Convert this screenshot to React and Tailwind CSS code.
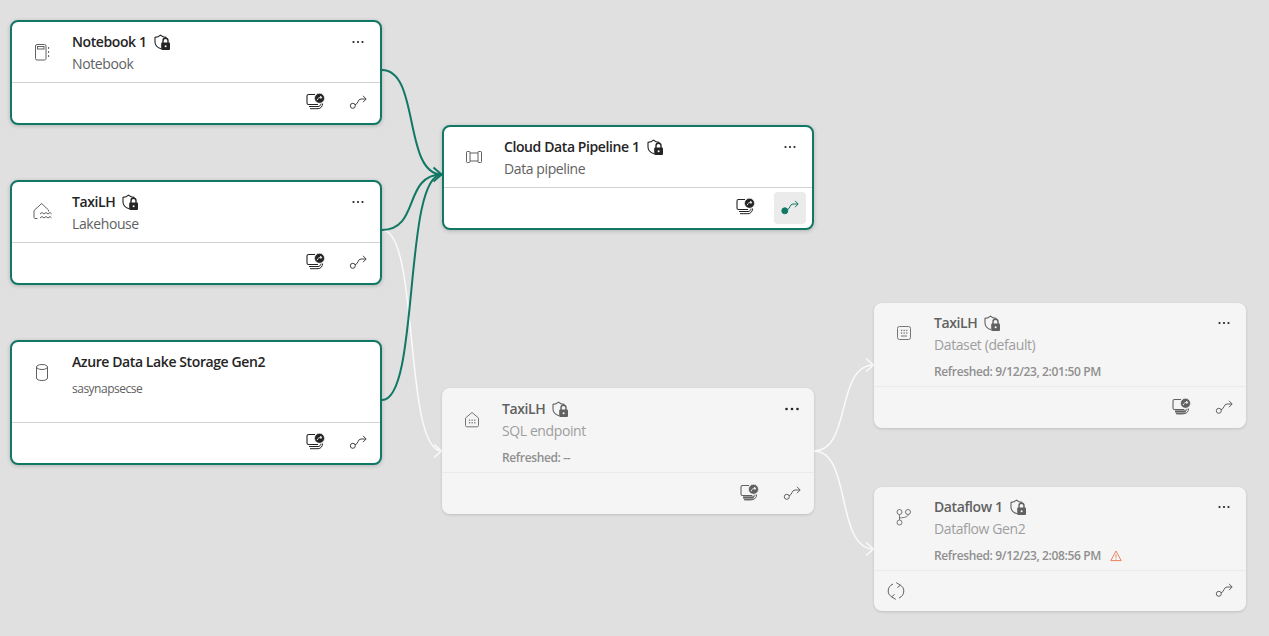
import React from "react";

const GREEN = "#117865";

const Shield = ({ c }) => (
  <svg width="18" height="18" viewBox="0 0 18 18" fill="none" className="shrink-0">
    <path d="M7 14.8C3.2 13.6 1 11.2 1 8V3.4C3.2 3.3 5 2.6 6.5 1.2C8 2.6 9.8 3.3 12 3.4V4.5" stroke={c} strokeWidth="1.1" strokeLinejoin="round" />
    <path d="M9 9V6.8a2.5 2.5 0 0 1 5 0V9" stroke={c} strokeWidth="1.4" />
    <rect x="7.2" y="8.6" width="8.8" height="7.4" rx="1" fill={c} />
    <circle cx="11.6" cy="12.3" r="1" fill="#fff" />
  </svg>
);

const Dots = ({ c, big }) => (
  <svg width="20" height="12" viewBox="0 0 20 12" fill={c}>
    <circle cx={big ? 4.5 : 5.5} cy="6" r={big ? 1.3 : 1.1} />
    <circle cx="10" cy="6" r={big ? 1.3 : 1.1} />
    <circle cx={big ? 15.5 : 14.5} cy="6" r={big ? 1.3 : 1.1} />
  </svg>
);

const Lineage = ({ c = "#424242", active }) => (
  <svg width="20" height="20" viewBox="0 0 20 20" fill="none">
    <circle cx="4.8" cy="12.8" r={active ? 3 : 2.5} stroke={active ? GREEN : c} fill={active ? GREEN : "none"} strokeWidth="1" />
    <path d="M7 11.8C10.5 11 9.5 6 13 6H18" stroke={active ? GREEN : c} strokeWidth="1" />
    <path d="M15 2.8L18.2 6L15 9.2" stroke={active ? GREEN : c} strokeWidth="1" />
  </svg>
);

const Monitor = ({ c = "#242424", soft }) => (
  <svg width="20" height="20" viewBox="0 0 20 20" fill="none">
    <g transform="translate(0 -1.5)">
      {soft && <path d="M3 13H14V15C14 17 12 18 10 18H6C4 18 3 16 3 15Z" fill="#9a9a9a" />}
      <path d="M9 3H2.5C1.7 3 1 3.7 1 4.5V11.5C1 12.3 1.7 13 2.5 13H12" stroke={c} strokeWidth="1.1" />
      <path d="M3 15H12C13.6 15 15 13.8 15 12" stroke={c} strokeWidth="1" />
      <path d="M4 17.2H12C14.6 17.2 16.6 15 16.6 12" stroke={c} strokeWidth="1" />
      <circle cx="13.5" cy="6.8" r="5" fill={c} stroke="#fff" strokeWidth="0.6" />
      <path d="M11.2 8.6C11.6 6.8 13 6 15.4 5.8M14 4.8L15.8 5.8L14.6 7.4" stroke="#fff" strokeWidth="0.9" />
    </g>
  </svg>
);

const Refresh = () => (
  <svg width="20" height="20" viewBox="0 0 20 20" fill="none" stroke="#616161" strokeWidth="1">
    <path d="M7 3C4 4.200 2.200 6.800 2.200 10C2.200 12.600 3.600 14.600 5.600 15.800" />
    <path d="M13 17C16 15.800 17.800 13.200 17.800 10C17.800 7.400 16.400 5.400 14.400 4.200" />
    <path d="M10.200 1.600L14.400 4.200L11.400 6.600M9.800 18.400L5.600 15.800L8.600 13.400" />
  </svg>
);

const Warn = () => (
  <svg width="12" height="12" viewBox="0 0 12 12" fill="none" stroke="#e8825c" strokeWidth="1">
    <path d="M6 1L11.2 10.6H0.8Z" strokeLinejoin="round" />
    <path d="M6 4.4V7.6M6 8.4V9.4" />
  </svg>
);

const Notebook = () => (
  <svg width="20" height="20" viewBox="0 0 20 20" fill="none" stroke="#616161" strokeWidth="1">
    <rect x="3.500" y="2.500" width="10.500" height="15.500" rx="1.500" />
    <rect x="5.500" y="4.500" width="6.500" height="2.500" />
    <path d="M16.600 5V7M16.600 9V11M16.600 13V15" />
  </svg>
);

const Lake = () => (
  <svg width="20" height="20" viewBox="0 0 20 20" fill="none" stroke="#616161" strokeWidth="1">
    <path d="M5.500 16.500H3C2.400 16.500 2 16 2 15.500V8.500L9.700 1.500L16.500 8V9.500" strokeLinejoin="round" />
    <path d="M8 12L10 10.500L12 12L14 10.500L16 12L18 10.500L19.600 12" />
    <path d="M8 16L10 14.500L12 16L14 14.500L16 16L18 14.500L19.600 16" />
  </svg>
);

const Cylinder = () => (
  <svg width="20" height="20" viewBox="0 0 20 20" fill="none" stroke="#616161" strokeWidth="1">
    <ellipse cx="10" cy="5" rx="5.500" ry="2.500" />
    <path d="M4.500 5V16C4.500 17.600 7 18.500 10 18.500S15.500 17.600 15.500 16V5" />
  </svg>
);

const Pipeline = () => (
  <svg width="20" height="20" viewBox="0 0 20 20" fill="none" stroke="#616161" strokeWidth="1">
    <rect x="2.500" y="4.500" width="3.500" height="11" rx="0.800" />
    <rect x="14" y="4.500" width="3.500" height="11" rx="0.800" />
    <path d="M6 6H14M6 14H14" />
  </svg>
);

const Grid = ({ ox, oy }) => (
  <g fill="#757575">
    {[0, 1, 2].map((i) => [0, 1].map((j) => <rect key={i + "-" + j} x={ox + i * 2.6} y={oy + j * 2.6} width="1.300" height="1.300" />))}
  </g>
);

const Sql = () => (
  <svg width="20" height="20" viewBox="0 0 20 20" fill="none">
    <path d="M3.500 9L10 3.500L16.500 9V16.500C16.500 17.300 16 17.800 15.200 17.800H4.800C4 17.800 3.500 17.300 3.500 16.500Z" stroke="#757575" strokeWidth="1" strokeLinejoin="round" />
    <Grid ox={6.900} oy={10.500} />
  </svg>
);

const Dataset = () => (
  <svg width="20" height="20" viewBox="0 0 20 20" fill="none">
    <rect x="3.500" y="3.500" width="13" height="13" rx="2" stroke="#757575" strokeWidth="1" />
    <Grid ox={6.900} oy={6.800} />
    <path d="M6.900 13H13" stroke="#757575" strokeWidth="1" />
  </svg>
);

const Flow = () => (
  <svg width="20" height="20" viewBox="0 0 20 20" fill="none" stroke="#757575" strokeWidth="1">
    <circle cx="5.500" cy="5" r="2.500" />
    <circle cx="14" cy="5" r="2.500" />
    <circle cx="5.500" cy="15.500" r="2.500" />
    <path d="M5.500 7.500V13M14 7.500C14 10 11 10.500 5.500 11" />
  </svg>
);

const nodes = [
  { pos: "left-[10px] top-[20px] w-[372px] h-[105px]", top: "h-[61px]", bottom: "h-[40px]", icon: <Notebook />, title: "Notebook 1", sub: "Notebook", lock: true },
  { pos: "left-[10px] top-[180px] w-[372px] h-[105px]", top: "h-[61px]", bottom: "h-[40px]", icon: <Lake />, title: "TaxiLH", sub: "Lakehouse", lock: true },
  { pos: "left-[10px] top-[340px] w-[372px] h-[125px]", top: "h-[81px]", bottom: "h-[40px]", icon: <Cylinder />, title: "Azure Data Lake Storage Gen2", small: "sasynapsecse", noDots: true },
  { pos: "left-[442px] top-[125px] w-[372px] h-[105px]", top: "h-[61px]", bottom: "h-[40px]", icon: <Pipeline />, title: "Cloud Data Pipeline 1", sub: "Data pipeline", lock: true, active: true },
  { pos: "left-[442px] top-[388px] w-[372px] h-[126px]", top: "h-[84px] pt-[1px]", bottom: "h-[41px]", grey: true, icon: <Sql />, title: "TaxiLH", sub: "SQL endpoint", lock: true, refreshed: "Refreshed: --", bigDots: true },
  { pos: "left-[874px] top-[303px] w-[372px] h-[125px]", top: "h-[83px]", bottom: "h-[41px]", grey: true, icon: <Dataset />, title: "TaxiLH", sub: "Dataset (default)", lock: true, refreshed: "Refreshed: 9/12/23, 2:01:50 PM" },
  { pos: "left-[874px] top-[487px] w-[372px] h-[124px]", top: "h-[83px]", bottom: "h-[40px]", grey: true, icon: <Flow />, title: "Dataflow 1", sub: "Dataflow Gen2", lock: true, refreshed: "Refreshed: 9/12/23, 2:08:56 PM", warn: true, refresh: true },
];

function Node({ n }) {
  const g = n.grey;
  return (
    <div className={"absolute flex flex-col rounded-lg " + n.pos + (g ? " bg-[#f5f5f5] shadow-[0_1px_3px_rgba(0,0,0,0.14)]" : " bg-white border-2 border-[#117865] shadow-[0_1px_4px_rgba(0,0,0,0.2)]")}>
      <div className={"flex items-start pl-5 pr-[12px] " + n.top}>
        <div className="mt-5 h-5 w-5 shrink-0">{n.icon}</div>
        <div className="ml-5 min-w-0 flex-1">
          <div className="flex h-5 mt-[10px] items-center">
            <span className={"text-[14px] leading-5 font-semibold tracking-[-0.4px] " + (g ? "text-[#616161]" : "text-[#242424]")}>{n.title}</span>
            {n.lock && <span className="ml-[7px] mt-[1px] flex"><Shield c={g ? "#616161" : "#242424"} /></span>}
          </div>
          {n.sub && <div className={"mt-[2px] text-[14px] leading-5 tracking-[-0.4px] " + (g ? "text-[#9e9e9e]" : "text-[#616161]")}>{n.sub}</div>}
          {n.small && <div className="mt-[9px] text-[12px] leading-4 tracking-[-0.5px] text-[#616161]">{n.small}</div>}
          {n.refreshed && (
            <div className="mt-[9px] flex h-4 items-center text-[12px] font-semibold leading-4 tracking-[-0.36px] text-[#8f8f8f]">
              {n.refreshed}
              {n.warn && <span className="ml-[9px] flex"><Warn /></span>}
            </div>
          )}
        </div>
        {!n.noDots && <div className="mt-[10px] flex h-5 w-5 shrink-0 items-center justify-center"><Dots c="#242424" big={n.bigDots} /></div>}
      </div>
      <div className={"h-px shrink-0 " + (g ? "bg-[#ebebeb]" : "bg-[#d1d1d1]")} />
      <div className={"flex items-center px-[6px] " + n.bottom + (n.refresh ? " justify-between" : " justify-end")}>
        {n.refresh ? (
          <div className="flex h-8 w-8 items-center justify-center"><Refresh /></div>
        ) : (
          <div className={"flex h-8 w-8 items-center justify-center " + (n.active ? "mr-3" : "mr-[10px]")}><Monitor c={g ? "#616161" : "#242424"} soft={g} /></div>
        )}
        <div className={"flex h-8 w-8 items-center justify-center rounded " + (n.active ? "bg-[#ebebeb]" : "")}><Lineage c={g ? "#616161" : "#424242"} active={n.active} /></div>
      </div>
    </div>
  );
}

export default function App() {
  return (
    <div className="relative h-[636px] w-full overflow-hidden bg-[#e0e0e0] font-['Open_Sans',sans-serif]">
      <svg className="absolute left-0 top-0" width="1269" height="636" fill="none">
        <g stroke="#fafafa" strokeWidth="1.500">
          <path d="M382 230C420 230 403 451 442 451" />
          <path d="M434 444.500L441.500 451L434 457.500" />
          <path d="M814 451C852 451 835 365 874 365" />
          <path d="M866 358.500L873.500 365L866 371.500" />
          <path d="M814 451C852 451 835 549 874 549" />
          <path d="M866 542.500L873.500 549L866 555.500" />
        </g>
        <g stroke={GREEN} strokeWidth="2">
          <path d="M382 70C420 70 403 174.500 442 174.500" />
          <path d="M382 230C420 230 403 174.500 442 174.500" />
          <path d="M382 400C420 400 403 174.500 442 174.500" />
          <path d="M433.500 167.500L441.500 174.500L433.500 181.500" />
        </g>
      </svg>
      {nodes.map((n) => <Node key={n.pos} n={n} />)}
    </div>
  );
}
